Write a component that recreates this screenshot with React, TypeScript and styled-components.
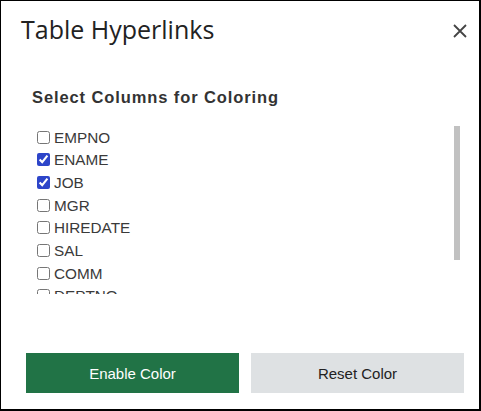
import { useState, type UIEvent } from "react";
import styled, { createGlobalStyle } from "styled-components";

const columns = ["EMPNO", "ENAME", "JOB", "MGR", "HIREDATE", "SAL", "COMM", "DEPTNO"];

const LIST_HEIGHT = 168;
const THUMB_HEIGHT = 134;

const GlobalStyle = createGlobalStyle`
  * {
    box-sizing: border-box;
  }

  body {
    margin: 0;
    font-family: "Liberation Sans", Arial, sans-serif;
    background: #fff;
  }
`;

function CloseIcon() {
  return (
    <svg width="14" height="14" viewBox="0 0 14 14">
      <path d="M1 1 L13 13 M13 1 L1 13" stroke="#444" strokeWidth="1.8" fill="none" />
    </svg>
  );
}

export default function App() {
  const [checked, setChecked] = useState<Record<string, boolean>>({
    ENAME: true,
    JOB: true,
  });
  const [thumbTop, setThumbTop] = useState(0);

  const toggle = (name: string) =>
    setChecked((prev) => ({ ...prev, [name]: !prev[name] }));

  const onScroll = (e: UIEvent<HTMLDivElement>) => {
    const el = e.currentTarget;
    const max = el.scrollHeight - el.clientHeight;
    const ratio = max > 0 ? el.scrollTop / max : 0;
    setThumbTop(ratio * (LIST_HEIGHT - THUMB_HEIGHT));
  };

  return (
    <>
      <GlobalStyle />
      <Dialog>
        <Header>
          <Title>Table Hyperlinks</Title>
          <CloseButton aria-label="Close">
            <CloseIcon />
          </CloseButton>
        </Header>
        <Body>
          <Heading>Select Columns for Coloring</Heading>
          <ListFrame>
            <ColumnList onScroll={onScroll}>
              {columns.map((name) => (
                <ColumnRow key={name}>
                  <Checkbox
                    type="checkbox"
                    checked={!!checked[name]}
                    onChange={() => toggle(name)}
                  />
                  {name}
                </ColumnRow>
              ))}
            </ColumnList>
            <ScrollThumb style={{ top: thumbTop }} />
          </ListFrame>
        </Body>
        <Footer>
          <ActionButton $primary>Enable Color</ActionButton>
          <ActionButton onClick={() => setChecked({})}>Reset Color</ActionButton>
        </Footer>
      </Dialog>
    </>
  );
}

const Dialog = styled.div`
  display: flex;
  flex-direction: column;

  width: 481px;
  height: 411px;

  background: #fff;
  border-style: solid;
  border-color: #000;
  border-width: 1px 2px 2px 1px;
`;

const Header = styled.div`
  display: flex;
  align-items: center;
  justify-content: space-between;

  height: 42px;
  padding: 14px 12px 0 20px;
`;

const Title = styled.h1`
  margin: 0;

  font-family: "Open Sans", "Noto Sans", sans-serif;
  font-size: 25px;
  font-weight: 400;
  line-height: 28px;
  color: #222;
`;

const CloseButton = styled.button`
  display: flex;
  margin-top: 4px;
  padding: 0;

  background: none;
  border: none;
  cursor: pointer;
`;

const Body = styled.div`
  padding: 45px 0 0 31px;
`;

const Heading = styled.h2`
  margin: 0 0 20px;

  font-size: 16.5px;
  font-weight: 700;
  letter-spacing: 0.9px;
  line-height: 18.4px;
  color: #333;
`;

const ListFrame = styled.div`
  position: relative;
  width: 428px;
  height: ${LIST_HEIGHT}px;
`;

const ColumnList = styled.div`
  height: 100%;
  padding-bottom: 29px;
  overflow-y: auto;
  scrollbar-width: none;

  &::-webkit-scrollbar {
    display: none;
  }
`;

const ScrollThumb = styled.div`
  position: absolute;
  right: 0;

  width: 6px;
  height: ${THUMB_HEIGHT}px;

  background: #c1c1c1;
`;

const ColumnRow = styled.label`
  display: flex;
  align-items: center;

  height: 22.67px;

  font-size: 15.3px;
  color: #3a3a3a;
`;

const Checkbox = styled.input`
  width: 13px;
  height: 13px;
  margin: 0 4px 1px 5px;

  accent-color: #2d45c9;
`;

const Footer = styled.div`
  display: flex;
  gap: 12px;

  margin-top: auto;
  padding: 0 15px 16px 25px;
`;

const ActionButton = styled.button<{ $primary?: boolean }>`
  flex: 1;
  height: 40px;

  font-family: "Liberation Sans", Arial, sans-serif;
  font-size: 15px;
  color: ${({ $primary }) => ($primary ? "#fff" : "#222")};

  background: ${({ $primary }) => ($primary ? "#217346" : "#dee1e3")};
  border: none;
  cursor: pointer;
`;
